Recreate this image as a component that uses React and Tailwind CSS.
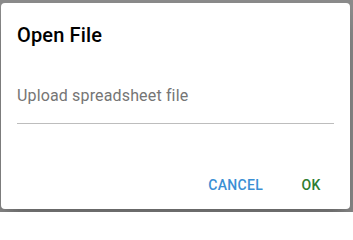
import React from 'react';

export default function App() {
  return (
    <div className="w-[353px] h-[212px] bg-[#8c8c8c] pt-[3px] pl-[1px] overflow-hidden" style={{ fontFamily: 'Roboto, "Liberation Sans", sans-serif' }}>
      <div className="w-[349px] h-[206px] bg-white rounded shadow-[0_11px_15px_-7px_rgba(0,0,0,0.2),0_24px_38px_3px_rgba(0,0,0,0.14)] flex flex-col">
        {/* Title */}
        <div className="px-4 pt-4">
          <h2 className="text-[20px] leading-[32px] font-medium tracking-[0.15px] text-black">Open File</h2>
        </div>

        {/* Input */}
        <div className="px-4 mt-[33px]">
          <div className="border-b border-[#bdbdbd] pb-[15px]">
            <input
              type="text"
              placeholder="Upload spreadsheet file"
              className="w-full text-[16px] leading-[24px] h-6 tracking-[0.15px] outline-none bg-transparent text-[#212121] placeholder:text-[#757575]"
            />
          </div>
        </div>

        <div className="flex-1" />

        {/* Actions */}
        <div className="flex justify-end items-center gap-2 pl-2 pr-[7px] pb-[6px]">
          <button className="min-w-16 px-2 py-[6px] text-[14px] leading-[24px] font-medium uppercase tracking-[0.3px] text-[#3a8fd4] rounded">
            Cancel
          </button>
          <button className="min-w-16 px-2 py-[6px] text-[14px] leading-[24px] font-medium uppercase tracking-[0.3px] text-[#2e7d32] rounded">
            OK
          </button>
        </div>
      </div>
    </div>
  );
}
